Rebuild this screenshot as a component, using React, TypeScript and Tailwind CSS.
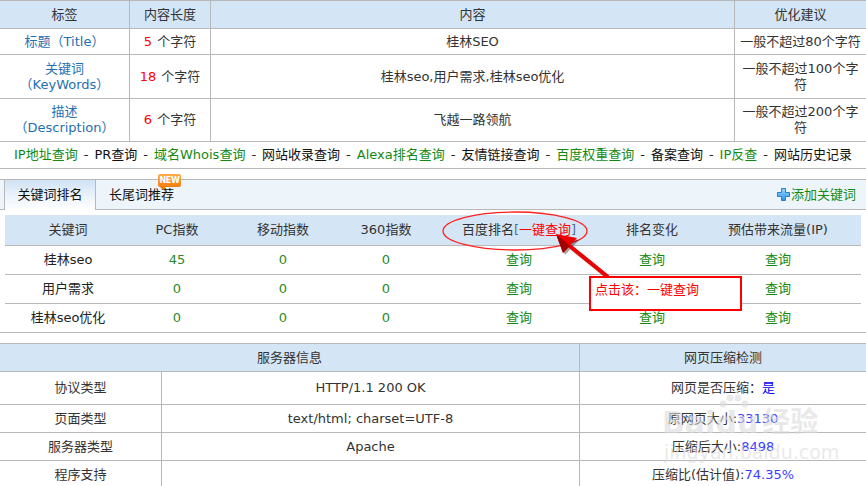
import React from "react";

const B = "border-[#b8b8b8]";

function PlusIcon() {
  return (
    <svg width="13" height="13" viewBox="0 0 13 13" className="mr-[1px]">
      <defs>
        <linearGradient id="pg" x1="0" y1="0" x2="0" y2="1">
          <stop offset="0" stopColor="#9ad8ff" />
          <stop offset="1" stopColor="#2b95e0" />
        </linearGradient>
      </defs>
      <path
        d="M4.5 0.5h4v4h4v4h-4v4h-4v-4h-4v-4h4z"
        fill="url(#pg)"
        stroke="#2a80c8"
        strokeWidth="1"
      />
    </svg>
  );
}

function Links() {
  const items: [string, boolean][] = [
    ["IP地址查询", true],
    ["PR查询", false],
    ["域名Whois查询", true],
    ["网站收录查询", false],
    ["Alexa排名查询", true],
    ["友情链接查询", false],
    ["百度权重查询", true],
    ["备案查询", false],
    ["IP反查", true],
    ["网站历史记录", false],
  ];
  return (
    <div className={`h-[27px] border-b ${B} flex items-center justify-center text-[13px] whitespace-nowrap`}>
      {items.map(([t, g], i) => (
        <React.Fragment key={t}>
          {i > 0 && <span className="text-[#222] px-[6px]">-</span>}
          <span className={g ? "text-[#138a13]" : "text-[#111]"}>{t}</span>
        </React.Fragment>
      ))}
    </div>
  );
}

export default function App() {
  const kwRows = [
    ["桂林seo", "45"],
    ["用户需求", "0"],
    ["桂林seo优化", "0"],
  ];
  const kwCols = "grid grid-cols-[126px_92px_120px_86px_180px_86px_166px]";
  const srvCols = "grid grid-cols-[162px_418px_286px]";
  return (
    <div className="w-[866px] h-[486px] overflow-hidden bg-white relative text-[13px] text-[#333] font-['DejaVu_Sans','Noto_Sans_CJK_SC',sans-serif] leading-[16px]">
      {/* Top table */}
      <div className={`border-t ${B}`}>
        <div className={`grid grid-cols-[130px_81px_524px_131px] h-[28px] border-b ${B} bg-[#d4e5f6]`}>
          <div className={`flex items-center justify-center border-r ${B}`}>标签</div>
          <div className={`flex items-center justify-center border-r ${B}`}>内容长度</div>
          <div className={`flex items-center justify-center border-r ${B}`}>内容</div>
          <div className="flex items-center justify-center">优化建议</div>
        </div>
        <div className={`grid grid-cols-[130px_81px_524px_131px] h-[26px] border-b ${B}`}>
          <div className={`flex items-center justify-center border-r ${B} text-[#1f6fb2]`}>标题（Title）</div>
          <div className={`flex items-center justify-center border-r ${B}`}>
            <span className="text-[#ff0000] mr-[5px]">5</span>个字符
          </div>
          <div className={`flex items-center justify-center border-r ${B}`}>桂林SEO</div>
          <div className="flex items-center justify-center">一般不超过80个字符</div>
        </div>
        <div className={`grid grid-cols-[130px_81px_524px_131px] h-[44px] border-b ${B}`}>
          <div className={`flex flex-col items-center justify-center border-r ${B} text-[#1f6fb2]`}>
            <span>关键词</span>
            <span>（KeyWords）</span>
          </div>
          <div className={`flex items-center justify-center border-r ${B}`}>
            <span className="text-[#ff0000] mr-[5px]">18</span>个字符
          </div>
          <div className={`flex items-center justify-center border-r ${B}`}>桂林seo,用户需求,桂林seo优化</div>
          <div className="flex flex-col items-center justify-center">
            <span>一般不超过100个字</span>
            <span>符</span>
          </div>
        </div>
        <div className={`grid grid-cols-[130px_81px_524px_131px] h-[43px] border-b ${B}`}>
          <div className={`flex flex-col items-center justify-center border-r ${B} text-[#1f6fb2]`}>
            <span>描述</span>
            <span>（Description）</span>
          </div>
          <div className={`flex items-center justify-center border-r ${B}`}>
            <span className="text-[#ff0000] mr-[5px]">6</span>个字符
          </div>
          <div className={`flex items-center justify-center border-r ${B}`}>飞越一路领航</div>
          <div className="flex flex-col items-center justify-center">
            <span>一般不超过200个字</span>
            <span>符</span>
          </div>
        </div>
      </div>

      <Links />

      <div className="h-[10px]" />

      {/* Tab bar */}
      <div className={`h-[31px] border-t border-b ${B} bg-[#eef5fa] flex items-stretch pl-[4px]`}>
        <div className={`w-[92px] h-[30px] -mb-px border-l border-r ${B} bg-gradient-to-b from-[#d0e2f4] via-[#e9f2fb] to-white flex items-center justify-center text-[#111]`}>
          关键词排名
        </div>
        <div className="relative flex items-center pl-[13px] text-[#111]">
          长尾词推荐
          <div className="absolute left-[62px] top-[-6px] w-[23px] h-[13px] rounded-[2px] bg-gradient-to-b from-[#ffad4a] to-[#f07d0a] flex items-center justify-center text-white text-[8px] leading-none font-bold font-['DejaVu_Sans',sans-serif] tracking-[-0.3px]">
            NEW
            <div className="absolute left-[2px] bottom-[-3px] w-0 h-0 border-l-[3px] border-l-transparent border-r-[3px] border-r-transparent border-t-[3px] border-t-[#f07d0a]" />
          </div>
        </div>
        <div className="ml-auto flex items-center pr-[10px] text-[#138a13]">
          <PlusIcon />
          添加关键词
        </div>
      </div>

      <div className="h-[5px]" />

      {/* Keyword table */}
      <div className={`px-[5px] border-b ${B}`}>
        <div className={`${kwCols} h-[31px] border-b ${B} bg-[#d4e5f6]`}>
          <div className="flex items-center justify-center">关键词</div>
          <div className="flex items-center justify-center">PC指数</div>
          <div className="flex items-center justify-center">移动指数</div>
          <div className="flex items-center justify-center">360指数</div>
          <div className="flex items-center justify-center whitespace-nowrap">
            百度排名<span className="text-[#4d6f99]">[</span>
            <span className="text-[#ff0000]">一键查询</span>
            <span className="text-[#4d6f99]">]</span>
          </div>
          <div className="flex items-center justify-center">排名变化</div>
          <div className="flex items-center justify-center">预估带来流量(IP)</div>
        </div>
        {kwRows.map(([k, pc], i) => (
          <div
            key={k}
            className={`${kwCols} ${i < 2 ? `h-[29px] border-b ${B}` : "h-[28px]"}`}
          >
            <div className="flex items-center justify-center text-[#222]">{k}</div>
            <div className="flex items-center justify-center text-[#2a8a2a]">{pc}</div>
            <div className="flex items-center justify-center text-[#2a8a2a]">0</div>
            <div className="flex items-center justify-center text-[#2a8a2a]">0</div>
            <div className="flex items-center justify-center text-[#138a13]">查询</div>
            <div className="flex items-center justify-center text-[#138a13]">查询</div>
            <div className="flex items-center justify-center text-[#138a13]">查询</div>
          </div>
        ))}
      </div>

      <div className="h-[10px]" />

      {/* Server table */}
      <div className={`border-t ${B}`}>
        <div className={`grid grid-cols-[580px_286px] h-[28px] border-b ${B} bg-[#d4e5f6]`}>
          <div className={`flex items-center justify-center border-r ${B}`}>服务器信息</div>
          <div className="flex items-center justify-center">网页压缩检测</div>
        </div>
        <div className={`${srvCols} h-[33px] border-b ${B}`}>
          <div className={`flex items-center justify-center border-r ${B}`}>协议类型</div>
          <div className={`flex items-center justify-center border-r ${B}`}>HTTP/1.1 200 OK</div>
          <div className="flex items-center justify-center">
            网页是否压缩：<span className="text-[#0000ff]">是</span>
          </div>
        </div>
        <div className={`${srvCols} h-[28px] border-b ${B}`}>
          <div className={`flex items-center justify-center border-r ${B}`}>页面类型</div>
          <div className={`flex items-center justify-center border-r ${B}`}>text/html; charset=UTF-8</div>
          <div className="flex items-center justify-center">
            原网页大小:<span className="text-[#3c3cff]">33130</span>
          </div>
        </div>
        <div className={`${srvCols} h-[28px] border-b ${B}`}>
          <div className={`flex items-center justify-center border-r ${B}`}>服务器类型</div>
          <div className={`flex items-center justify-center border-r ${B}`}>Apache</div>
          <div className="flex items-center justify-center">
            压缩后大小:<span className="text-[#3c3cff]">8498</span>
          </div>
        </div>
        <div className={`${srvCols} h-[28px]`}>
          <div className={`flex items-center justify-center border-r ${B}`}>程序支持</div>
          <div className={`flex items-center justify-center border-r ${B}`}></div>
          <div className="flex items-center justify-center">
            压缩比(估计值):<span className="text-[#3c3cff]">74.35%</span>
          </div>
        </div>
      </div>

      {/* Annotation overlay: ellipse + arrow */}
      <svg className="absolute left-0 top-0 pointer-events-none" width="866" height="486">
        <ellipse cx="515" cy="231" rx="72" ry="19" fill="none" stroke="#ff2020" strokeWidth="1.3" />
        <g transform="translate(2,2)" opacity="0.35">
          <line x1="608" y1="277" x2="566" y2="243" stroke="#000" strokeWidth="4" />
          <polygon points="556,234 577,238 563,253" fill="#000" />
        </g>
        <line x1="608" y1="277" x2="566" y2="243" stroke="#ee0000" strokeWidth="4" />
        <polygon points="556,234 577,238 563,253" fill="#ee0000" />
        <polygon points="556,234 570,246 563,253" fill="#a00000" />
      </svg>

      {/* Red note box */}
      <div className="absolute left-[589px] top-[276px] w-[153px] h-[35px] border-2 border-[#ff0000] bg-white pl-[4px] pt-[4px] text-[#ff0000] text-[13px]">
        点击该：一键查询
      </div>

      {/* Watermark */}
      <div className="absolute left-[662px] top-[408px] pointer-events-none flex items-end text-[30px] leading-[30px] font-bold text-[#dcdcdc] opacity-60 font-['DejaVu_Sans','Noto_Sans_CJK_SC',sans-serif]">
        <span>Bai</span>
        <span className="relative">
          du
          <svg className="absolute left-[2px] top-[-14px]" width="34" height="18" viewBox="0 0 34 18">
            <circle cx="6" cy="10" r="3.5" fill="#dcdcdc" />
            <circle cx="13" cy="4" r="3.5" fill="#dcdcdc" />
            <circle cx="21" cy="4" r="3.5" fill="#dcdcdc" />
            <circle cx="28" cy="10" r="3.5" fill="#dcdcdc" />
          </svg>
        </span>
        <span className="ml-[4px] text-[28px]">经验</span>
      </div>
      <div className="absolute left-[664px] top-[442px] pointer-events-none text-[19px] leading-[20px] text-[#dcdcdc] opacity-60 font-['DejaVu_Sans',sans-serif]">
        jingyan.baidu.com
      </div>
    </div>
  );
}
